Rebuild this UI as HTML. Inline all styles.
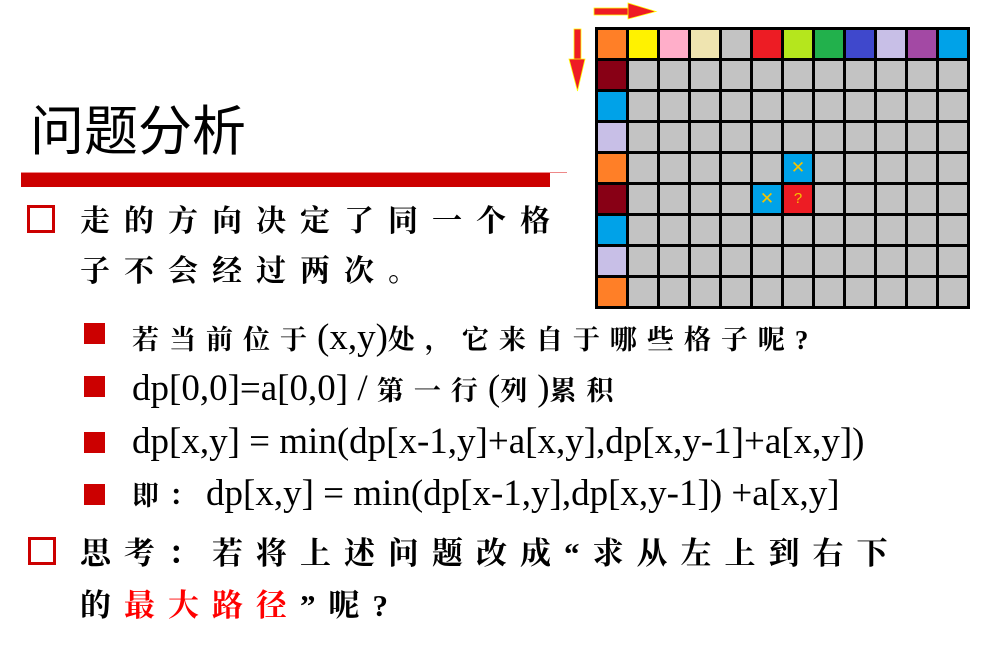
<!DOCTYPE html>
<html><head><meta charset="utf-8"><style>
body{margin:0;width:986px;height:646px;background:#fff;position:relative;overflow:hidden;font-family:"Liberation Serif","Noto Serif CJK SC",serif;color:#000}
.a{position:absolute;white-space:nowrap}
.title{left:30px;top:98px;font-family:"Liberation Sans","Noto Sans CJK SC",sans-serif;font-size:54px;line-height:68px}
.bar{left:21px;top:173px;width:529px;height:14px;background:#cc0000}
.thin{left:21px;top:172px;width:546px;height:1px;background:#e88}
.hb{width:22px;height:22px;border:3px solid #cc0000}
.sb{width:21px;height:21px;background:#cc0000}
.cj{font-size:30px;letter-spacing:14px;line-height:40px;font-weight:bold}
.sub{font-size:37px;line-height:44px}
.sub .c{font-size:27px;letter-spacing:10px;font-weight:bold}
table{position:absolute;left:595px;top:27px;border-collapse:collapse;background:#000}
td{width:28px;height:28px;padding:0;border:3px solid #000;background:#c3c3c3;text-align:center;color:#f5c400;font-family:"Liberation Sans",sans-serif;font-size:17px;line-height:28px}
</style></head><body>
<svg class="a" style="left:592px;top:2px" width="66" height="18"><rect x="2" y="6" width="36" height="7" fill="#ee1c24" stroke="#ff0" stroke-width="0.8"/><polygon points="36,1 64,9.5 36,17" fill="#ee1c24" stroke="#ff0" stroke-width="0.8"/></svg>
<svg class="a" style="left:568px;top:27px" width="18" height="66"><rect x="6" y="2" width="7" height="32" fill="#ee1c24" stroke="#ff0" stroke-width="0.8"/><polygon points="1,32 17,32 9.5,64" fill="#ee1c24" stroke="#ff0" stroke-width="0.8"/></svg>
<table>
<tr><td style="background:#ff7f27"></td><td style="background:#fff200"></td><td style="background:#ffaec9"></td><td style="background:#efe4b0"></td><td></td><td style="background:#ed1c24"></td><td style="background:#b5e61d"></td><td style="background:#22b14c"></td><td style="background:#3f48cc"></td><td style="background:#c8bfe7"></td><td style="background:#a349a4"></td><td style="background:#00a2e8"></td></tr>
<tr><td style="background:#880015"></td><td></td><td></td><td></td><td></td><td></td><td></td><td></td><td></td><td></td><td></td><td></td></tr>
<tr><td style="background:#00a2e8"></td><td></td><td></td><td></td><td></td><td></td><td></td><td></td><td></td><td></td><td></td><td></td></tr>
<tr><td style="background:#c8bfe7"></td><td></td><td></td><td></td><td></td><td></td><td></td><td></td><td></td><td></td><td></td><td></td></tr>
<tr><td style="background:#ff7f27"></td><td></td><td></td><td></td><td></td><td></td><td style="background:#00a2e8">✕</td><td></td><td></td><td></td><td></td><td></td></tr>
<tr><td style="background:#880015"></td><td></td><td></td><td></td><td></td><td style="background:#00a2e8">✕</td><td style="background:#ed1c24;font-size:15px">?</td><td></td><td></td><td></td><td></td><td></td></tr>
<tr><td style="background:#00a2e8"></td><td></td><td></td><td></td><td></td><td></td><td></td><td></td><td></td><td></td><td></td><td></td></tr>
<tr><td style="background:#c8bfe7"></td><td></td><td></td><td></td><td></td><td></td><td></td><td></td><td></td><td></td><td></td><td></td></tr>
<tr><td style="background:#ff7f27"></td><td></td><td></td><td></td><td></td><td></td><td></td><td></td><td></td><td></td><td></td><td></td></tr>
</table>
<div class="a title">问题分析</div>
<div class="a thin"></div>
<div class="a bar"></div>
<div class="a hb" style="left:27px;top:205px"></div>
<div class="a cj" style="left:80px;top:202px">走的方向决定了同一个格</div>
<div class="a cj" style="left:80px;top:252px">子不会经过两次。</div>
<div class="a sb" style="left:84px;top:323px"></div>
<div class="a sub" style="left:132px;top:316px"><span class="c">若当前位于</span>(x,y)<span class="c">处，它来自于哪些格子呢?</span></div>
<div class="a sb" style="left:84px;top:376px"></div>
<div class="a sub" style="left:132px;top:367px">dp[0,0]=a[0,0] / <span class="c">第一行</span>(<span class="c">列</span>)<span class="c">累积</span></div>
<div class="a sb" style="left:84px;top:432px"></div>
<div class="a sub" style="left:132px;top:420px">dp[x,y] = min(dp[x-1,y]+a[x,y],dp[x,y-1]+a[x,y])</div>
<div class="a sb" style="left:84px;top:484px"></div>
<div class="a sub" style="left:132px;top:472px"><span class="c">即：</span>dp[x,y] = min(dp[x-1,y],dp[x,y-1]) +a[x,y]</div>
<div class="a hb" style="left:28px;top:537px"></div>
<div class="a cj" style="left:80px;top:534px;font-size:31px;letter-spacing:13px">思考：若将上述问题改成“求从左上到右下</div>
<div class="a cj" style="left:80px;top:586px;font-size:31px;letter-spacing:13px">的<span style="color:#ff0000">最大路径</span>”呢?</div>
</body></html>
